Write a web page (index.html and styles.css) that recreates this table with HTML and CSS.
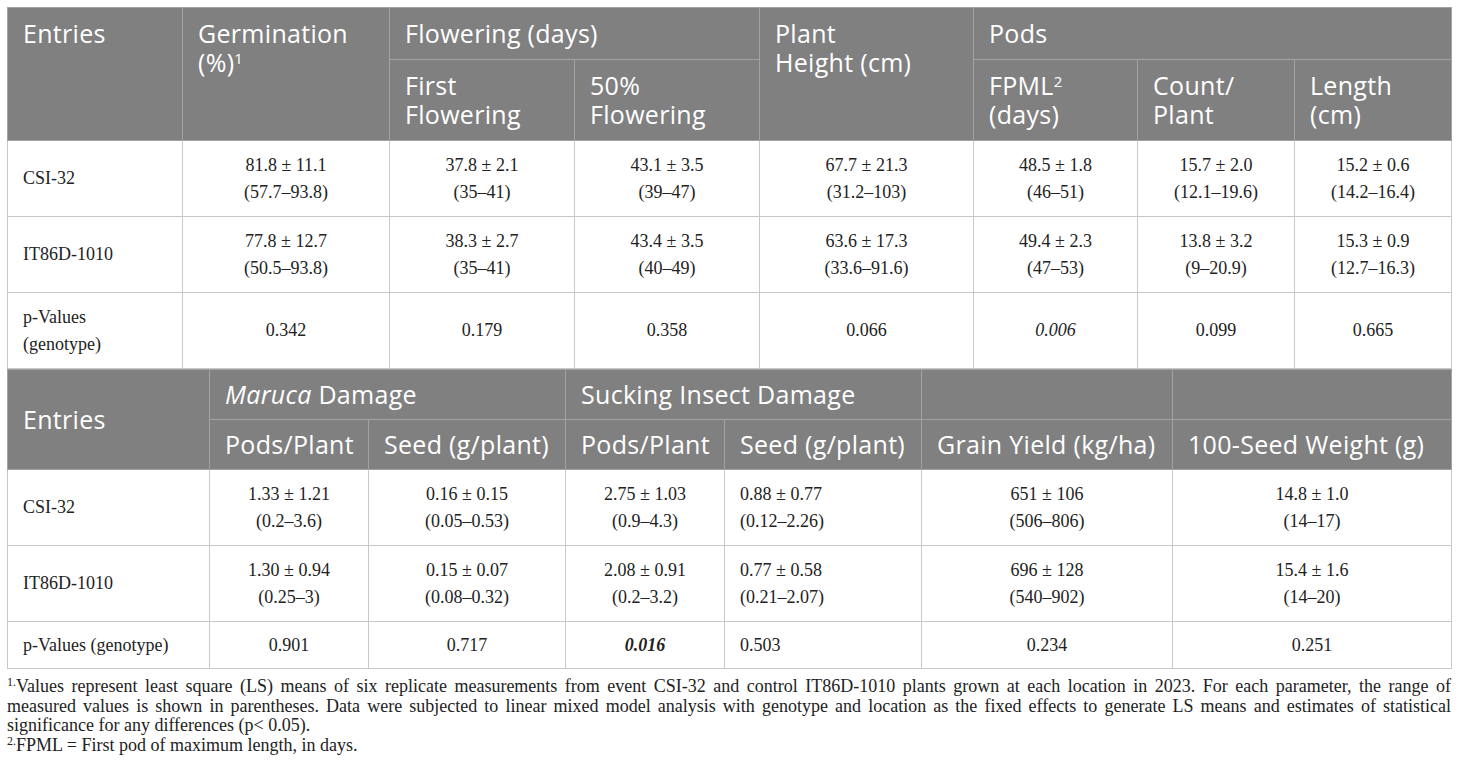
FILE: index.html
```html
<!DOCTYPE html>
<html>
<head>
<meta charset="utf-8">
<link rel="stylesheet" href="styles.css">
</head>
<body>
<div class="page">
<table class="tbl top">
<colgroup>
<col class="w175"><col class="w207"><col class="w185"><col class="w185"><col class="w214"><col class="w164"><col class="w157"><col class="w157">
</colgroup>
<thead>
<tr>
<th rowspan="2">Entries</th>
<th rowspan="2">Germination<br>(%)<sup>1</sup></th>
<th colspan="2">Flowering (days)</th>
<th rowspan="2">Plant<br>Height (cm)</th>
<th colspan="3">Pods</th>
</tr>
<tr>
<th>First<br>Flowering</th>
<th>50%<br>Flowering</th>
<th>FPML<sup>2</sup><br>(days)</th>
<th>Count/<br>Plant</th>
<th>Length<br>(cm)</th>
</tr>
</thead>
<tbody>
<tr>
<td class="left">CSI-32</td>
<td>81.8 ± 11.1<br>(57.7–93.8)</td>
<td>37.8 ± 2.1<br>(35–41)</td>
<td>43.1 ± 3.5<br>(39–47)</td>
<td>67.7 ± 21.3<br>(31.2–103)</td>
<td>48.5 ± 1.8<br>(46–51)</td>
<td>15.7 ± 2.0<br>(12.1–19.6)</td>
<td>15.2 ± 0.6<br>(14.2–16.4)</td>
</tr>
<tr>
<td class="left">IT86D-1010</td>
<td>77.8 ± 12.7<br>(50.5–93.8)</td>
<td>38.3 ± 2.7<br>(35–41)</td>
<td>43.4 ± 3.5<br>(40–49)</td>
<td>63.6 ± 17.3<br>(33.6–91.6)</td>
<td>49.4 ± 2.3<br>(47–53)</td>
<td>13.8 ± 3.2<br>(9–20.9)</td>
<td>15.3 ± 0.9<br>(12.7–16.3)</td>
</tr>
<tr>
<td class="left">p-Values<br>(genotype)</td>
<td>0.342</td>
<td>0.179</td>
<td>0.358</td>
<td>0.066</td>
<td><em>0.006</em></td>
<td>0.099</td>
<td>0.665</td>
</tr>
</tbody>
</table>
<table class="tbl bottom">
<colgroup>
<col class="w202"><col class="w159"><col class="w197"><col class="w159"><col class="w197"><col class="w251"><col class="w279">
</colgroup>
<thead>
<tr>
<th rowspan="2" class="mid">Entries</th>
<th colspan="2"><em>Maruca</em> Damage</th>
<th colspan="2">Sucking Insect Damage</th>
<th></th>
<th></th>
</tr>
<tr>
<th>Pods/Plant</th>
<th>Seed (g/plant)</th>
<th>Pods/Plant</th>
<th>Seed (g/plant)</th>
<th>Grain Yield (kg/ha)</th>
<th>100-Seed Weight (g)</th>
</tr>
</thead>
<tbody>
<tr>
<td class="left">CSI-32</td>
<td>1.33 ± 1.21<br>(0.2–3.6)</td>
<td>0.16 ± 0.15<br>(0.05–0.53)</td>
<td>2.75 ± 1.03<br>(0.9–4.3)</td>
<td class="left">0.88 ± 0.77<br>(0.12–2.26)</td>
<td>651 ± 106<br>(506–806)</td>
<td>14.8 ± 1.0<br>(14–17)</td>
</tr>
<tr>
<td class="left">IT86D-1010</td>
<td>1.30 ± 0.94<br>(0.25–3)</td>
<td>0.15 ± 0.07<br>(0.08–0.32)</td>
<td>2.08 ± 0.91<br>(0.2–3.2)</td>
<td class="left">0.77 ± 0.58<br>(0.21–2.07)</td>
<td>696 ± 128<br>(540–902)</td>
<td>15.4 ± 1.6<br>(14–20)</td>
</tr>
<tr class="single">
<td class="left">p-Values (genotype)</td>
<td>0.901</td>
<td>0.717</td>
<td><strong><em>0.016</em></strong></td>
<td class="left">0.503</td>
<td>0.234</td>
<td>0.251</td>
</tr>
</tbody>
</table>
<div class="notes">
<p>
<span class="ln"><sup>1.</sup>Values represent least square (LS) means of six replicate measurements from event CSI-32 and control IT86D-1010 plants grown at each location in 2023. For each parameter, the range of</span>
<span class="ln">measured values is shown in parentheses. Data were subjected to linear mixed model analysis with genotype and location as the fixed effects to generate LS means and estimates of statistical</span>
<span class="ln last">significance for any differences (p&lt; 0.05).</span>
</p>
<p><span class="ln last"><sup>2.</sup>FPML = First pod of maximum length, in days.</span></p>
</div>
</div>
</body>
</html>
```

FILE: styles.css
```css
html, body {
  margin: 0;
  padding: 0;
  background: #ffffff;
}
.page {
  padding: 7px 0 0 7px;
  width: 1444px;
}
.tbl {
  border-collapse: collapse;
  table-layout: fixed;
  width: 1444px;
}
.w175 { width: 175px; }
.w207 { width: 207px; }
.w185 { width: 185px; }
.w214 { width: 214px; }
.w164 { width: 164px; }
.w157 { width: 157px; }
.w202 { width: 202px; }
.w159 { width: 159px; }
.w197 { width: 197px; }
.w251 { width: 251px; }
.w279 { width: 279px; }
.tbl th {
  background: #808080;
  color: #ffffff;
  font-family: "Open Sans", "Noto Sans", sans-serif;
  font-weight: 400;
  font-size: 25px;
  letter-spacing: 0.3px;
  line-height: 29px;
  text-align: left;
  vertical-align: top;
  padding: 11px 15px;
  border: 1px solid #a2a2a2;
}
.bottom th {
  padding-top: 10px;
  padding-bottom: 10px;
}
.tbl th.mid {
  vertical-align: middle;
}
.tbl th sup {
  font-size: 15px;
  line-height: 0;
  vertical-align: 8px;
}
.tbl td {
  font-family: "Liberation Serif", serif;
  font-size: 18px;
  line-height: 27px;
  color: #222222;
  text-align: center;
  vertical-align: middle;
  padding: 10.5px 15px;
  border: 1px solid #c8c8c8;
}
.tbl tr.single td {
  padding-top: 9.5px;
  padding-bottom: 9.5px;
}
.tbl td.left {
  text-align: left;
}
.notes {
  font-family: "Liberation Serif", serif;
  font-size: 18px;
  line-height: 19.7px;
  color: #222222;
  margin-top: 8px;
}
.notes p {
  margin: 0;
}
.notes .ln {
  display: block;
  text-align: justify;
  text-align-last: justify;
}
.notes .ln.last {
  text-align-last: left;
}
.notes sup {
  font-size: 12px;
  line-height: 0;
  vertical-align: 6px;
}
```
